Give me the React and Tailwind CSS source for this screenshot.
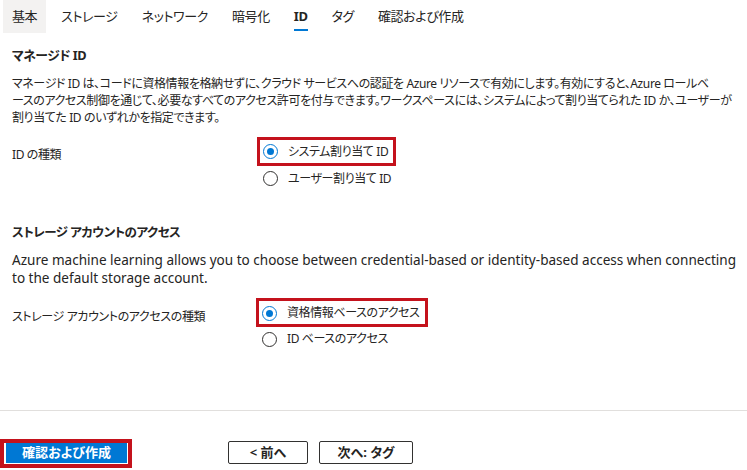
import { useState } from 'react';

const tabs = ['基本', 'ストレージ', 'ネットワーク', '暗号化', 'ID', 'タグ', '確認および作成'];

function Radio({ checked }) {
    return (
        <span
            className={`w-[15px] h-[15px] shrink-0 rounded-full border flex items-center justify-center ${
                checked ? 'border-[#0078d4]' : 'border-[#323130]'
            }`}
        >
            {checked && <span className="w-[7px] h-[7px] rounded-full bg-[#0078d4]" />}
        </span>
    );
}

function RadioRow({ label, checked, onClick, marked, rowH }) {
    return (
        <div className={`flex items-center ${rowH}`}>
            <button type="button" onClick={onClick} className="relative flex items-center gap-[10px] h-[20px]">
                <Radio checked={checked} />
                <span className="whitespace-nowrap">{label}</span>
                {marked && (
                    <span className="absolute -left-[6px] -right-[8px] -top-[5px] -bottom-[4px] border-[3px] border-[#c4121c] pointer-events-none" />
                )}
            </button>
        </div>
    );
}

export default function App() {
    const [identity, setIdentity] = useState('system');
    const [access, setAccess] = useState('credential');

    return (
        <div className="w-[747px] h-[470px] bg-white text-[#252423] flex flex-col overflow-hidden font-['Noto_Sans','Noto_Sans_CJK_JP',sans-serif] [font-feature-settings:'palt']">
            <nav className="flex h-[33px] pl-[3px] gap-[6px] text-[13px] tracking-[-0.4px]">
                {tabs.map((t) => (
                    <div
                        key={t}
                        className={`relative flex items-center px-[9px] ${t === '基本' ? 'bg-[#f3f2f1]' : ''} ${
                            t === 'ID' ? 'font-bold' : ''
                        }`}
                    >
                        <span className="relative">
                            {t}
                            {t === 'ID' && (
                                <span className="absolute left-0 right-0 top-[22px] h-[2px] bg-[#0078d4]" />
                            )}
                        </span>
                    </div>
                ))}
            </nav>

            <main className="flex-1 px-[12px] text-[12px] tracking-[-0.4px]">
                <h2 className="mt-[13px] text-[12.8px] tracking-[-0.5px] font-bold leading-[18px]">マネージド ID</h2>
                <p className="mt-[11px] leading-[17px]">
                    <span className="block whitespace-nowrap">
                        マネージド ID は、コードに資格情報を格納せずに、クラウド サービスへの認証を Azure リソースで有効にします。有効にすると、Azure ロールベ
                    </span>
                    <span className="block whitespace-nowrap">
                        ースのアクセス制御を通じて、必要なすべてのアクセス許可を付与できます。ワークスペースには、システムによって割り当てられた ID か、ユーザーが
                    </span>
                    <span className="block whitespace-nowrap">割り当てた ID のいずれかを指定できます。</span>
                </p>

                <div className="mt-[12px] flex">
                    <div className="w-[251px] pt-[8px] leading-[18px]">ID の種類</div>
                    <div className="flex flex-col">
                        <RadioRow
                            rowH="h-[27px]"
                            label="システム割り当て ID"
                            checked={identity === 'system'}
                            onClick={() => setIdentity('system')}
                            marked
                        />
                        <RadioRow
                            rowH="h-[27px]"
                            label="ユーザー割り当て ID"
                            checked={identity === 'user'}
                            onClick={() => setIdentity('user')}
                        />
                    </div>
                </div>

                <h2 className="mt-[32px] text-[12.5px] tracking-[-0.5px] font-bold leading-[18px]">ストレージ アカウントのアクセス</h2>
                <p className="mt-[9px] leading-[18px] text-[13.55px] tracking-normal">
                    <span className="block whitespace-nowrap">
                        Azure machine learning allows you to choose between credential-based or identity-based access when connecting
                    </span>
                    <span className="block whitespace-nowrap">to the default storage account.</span>
                </p>

                <div className="mt-[13px] flex">
                    <div className="w-[250px] pt-[8px] leading-[18px]">ストレージ アカウントのアクセスの種類</div>
                    <div className="flex flex-col">
                        <RadioRow
                            rowH="h-[26px]"
                            label="資格情報ベースのアクセス"
                            checked={access === 'credential'}
                            onClick={() => setAccess('credential')}
                            marked
                        />
                        <RadioRow
                            rowH="h-[26px]"
                            label="ID ベースのアクセス"
                            checked={access === 'identity'}
                            onClick={() => setAccess('identity')}
                        />
                    </div>
                </div>
            </main>

            <footer className="h-[60px] shrink-0 border-t border-[#e1dfdd] pt-[30px] flex items-start text-[13px] font-bold">
                <div className="relative ml-[6px] mt-[2px]">
                    <button type="button" className="w-[121px] h-[20px] bg-[#0078d4] text-white flex items-center justify-center">
                        確認および作成
                    </button>
                    <span className="absolute -left-[6px] -right-[5px] -top-[4px] -bottom-[5px] border-[4px] border-[#c4121c] pointer-events-none" />
                </div>
                <button
                    type="button"
                    className="ml-[101px] w-[80px] h-[23px] border border-[#323130] rounded-[2px] flex items-center justify-center"
                >
                    &lt; 前へ
                </button>
                <button
                    type="button"
                    className="ml-[11px] w-[94px] h-[23px] border border-[#323130] rounded-[2px] flex items-center justify-center"
                >
                    次へ: タグ
                </button>
            </footer>
        </div>
    );
}
